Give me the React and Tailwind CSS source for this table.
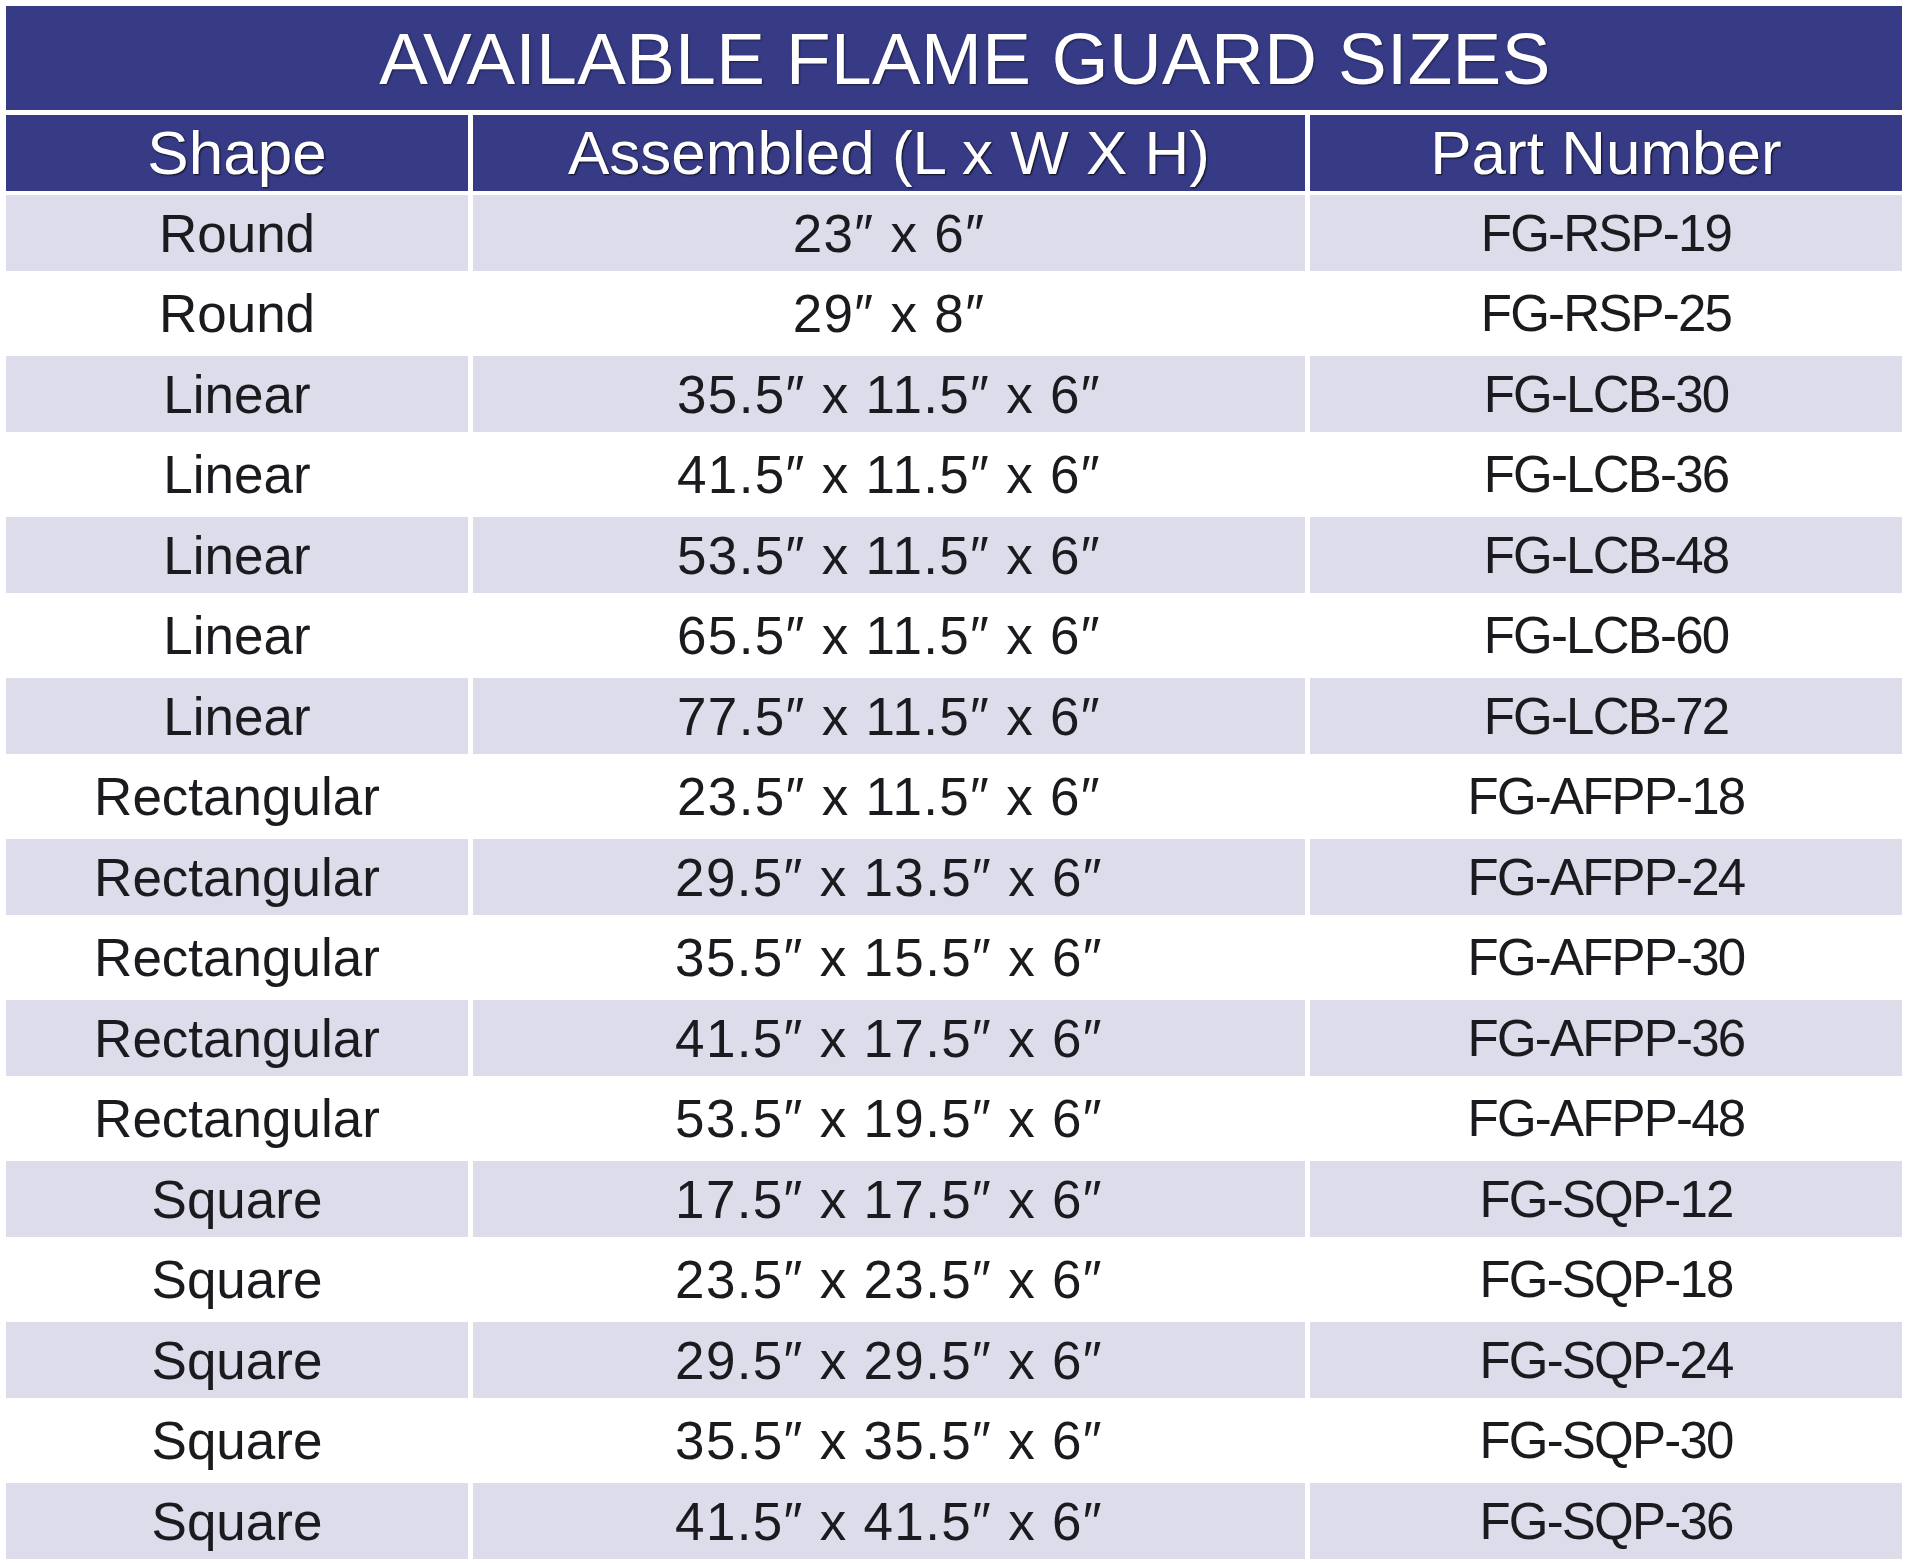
const rows = [
  ["Round", "23″ x 6″", "FG-RSP-19"],
  ["Round", "29″ x 8″", "FG-RSP-25"],
  ["Linear", "35.5″ x 11.5″ x 6″", "FG-LCB-30"],
  ["Linear", "41.5″ x 11.5″ x 6″", "FG-LCB-36"],
  ["Linear", "53.5″ x 11.5″ x 6″", "FG-LCB-48"],
  ["Linear", "65.5″ x 11.5″ x 6″", "FG-LCB-60"],
  ["Linear", "77.5″ x 11.5″ x 6″", "FG-LCB-72"],
  ["Rectangular", "23.5″ x 11.5″ x 6″", "FG-AFPP-18"],
  ["Rectangular", "29.5″ x 13.5″ x 6″", "FG-AFPP-24"],
  ["Rectangular", "35.5″ x 15.5″ x 6″", "FG-AFPP-30"],
  ["Rectangular", "41.5″ x 17.5″ x 6″", "FG-AFPP-36"],
  ["Rectangular", "53.5″ x 19.5″ x 6″", "FG-AFPP-48"],
  ["Square", "17.5″ x 17.5″ x 6″", "FG-SQP-12"],
  ["Square", "23.5″ x 23.5″ x 6″", "FG-SQP-18"],
  ["Square", "29.5″ x 29.5″ x 6″", "FG-SQP-24"],
  ["Square", "35.5″ x 35.5″ x 6″", "FG-SQP-30"],
  ["Square", "41.5″ x 41.5″ x 6″", "FG-SQP-36"],
]

const headers = ["Shape", "Assembled (L x W X H)", "Part Number"]

// per-column text tweaks: sizes column is spaced out, part numbers are tighter
const cellText = [
  "text-[53px]",
  "text-[53px] tracking-[0.025em]",
  "text-[51px] tracking-[-0.035em]",
]

export default function App() {
  return (
    <main className="min-h-screen bg-white px-[6px] pt-[6px] font-['Liberation_Sans',Arial,sans-serif]">
      <div className="w-[1896px] flex flex-col">
        <div className="h-[104px] bg-[#373b86] pl-[22px] flex items-center justify-center">
          <h1 className="text-[73px] leading-none tracking-[0.005em] text-white [text-shadow:1px_1px_2px_rgba(0,0,0,0.5)]">
            AVAILABLE FLAME GUARD SIZES
          </h1>
        </div>

        <div className="mt-[5px] grid grid-cols-[462px_832px_592px] gap-x-[5px]">
          {headers.map((h) => (
            <div
              key={h}
              className="h-[76px] bg-[#373b86] flex items-center justify-center text-[62px] leading-none text-white [text-shadow:1px_1px_2px_rgba(0,0,0,0.8)]"
            >
              {h}
            </div>
          ))}
        </div>

        <div className="mt-[4px] grid grid-cols-[462px_832px_592px] gap-x-[5px] gap-y-[4.5px]">
          {rows.map((row, i) =>
            row.map((cell, j) => (
              <div
                key={i + "-" + j}
                className={
                  "h-[76px] flex items-center justify-center leading-none text-[#1b1b1f] " +
                  cellText[j] +
                  " " +
                  (i % 2 === 0 ? "bg-[#dcdcea]" : "bg-white")
                }
              >
                {cell}
              </div>
            ))
          )}
        </div>
      </div>
    </main>
  )
}
